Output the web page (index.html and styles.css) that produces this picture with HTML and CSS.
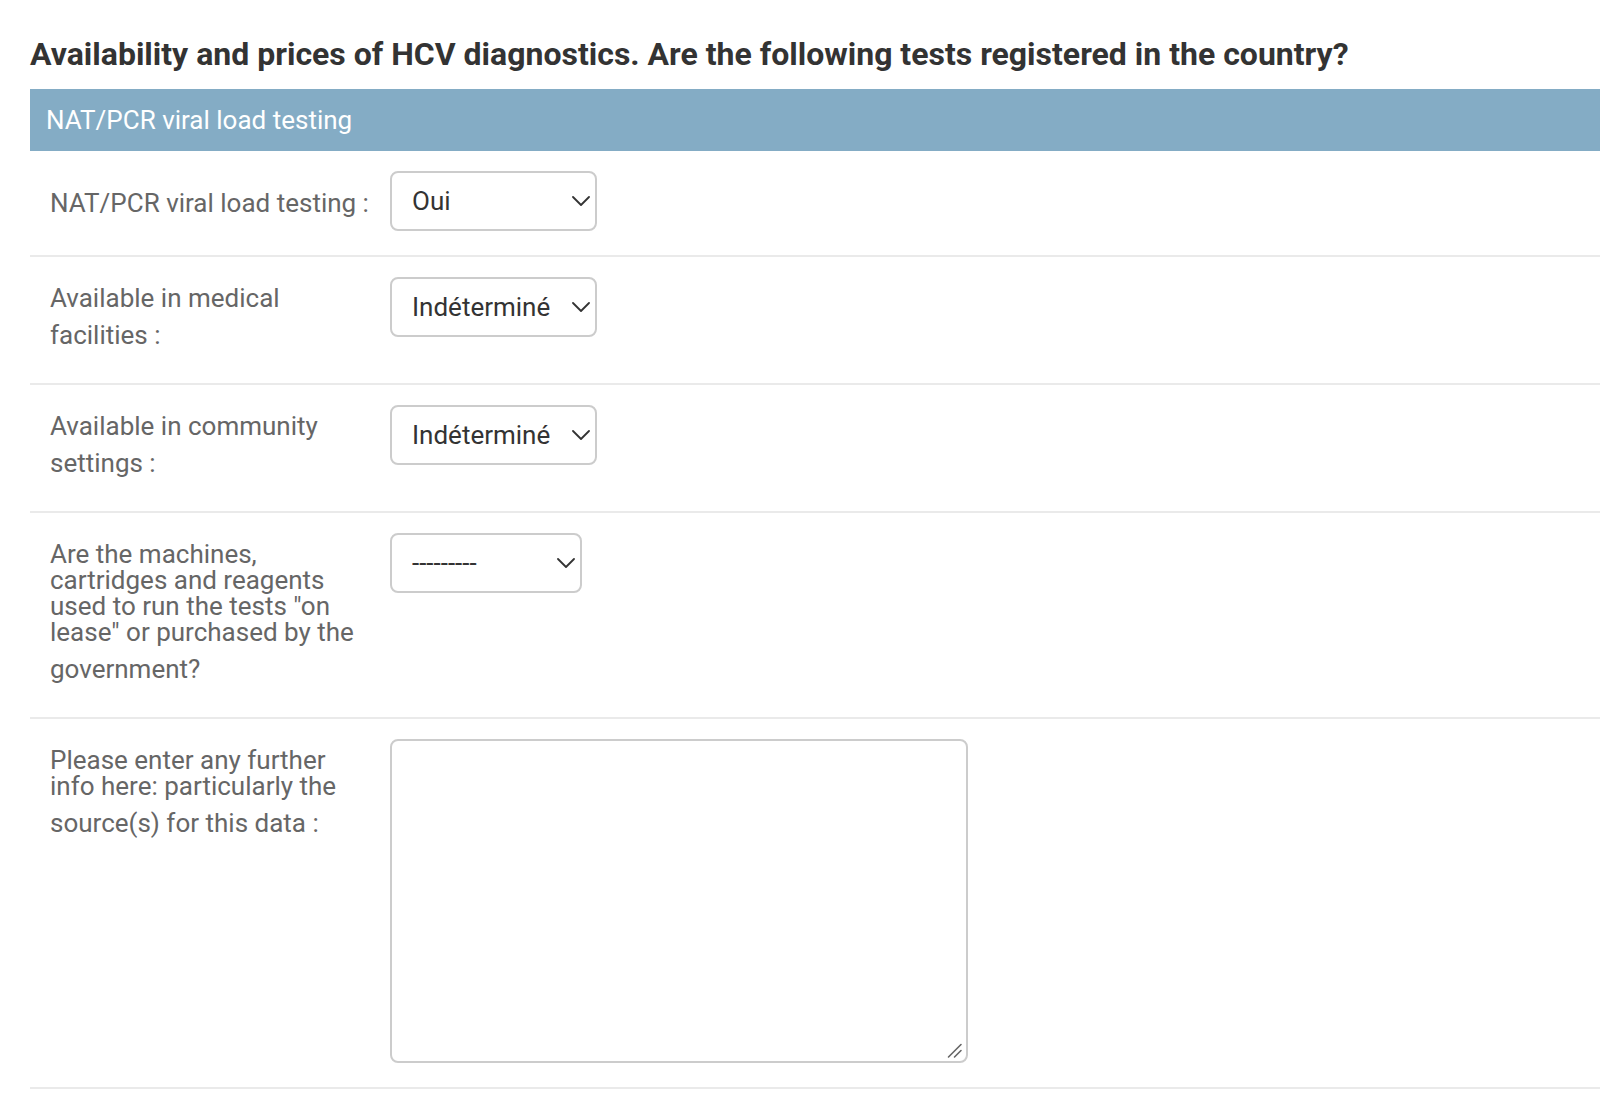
FILE: index.html
```html
<!DOCTYPE html>
<html lang="fr">
<head>
<meta charset="utf-8">
<title>HCV diagnostics</title>
<link rel="stylesheet" href="styles.css">
</head>
<body>
<main class="content">
  <h2 class="page-title">Availability and prices of HCV diagnostics. Are the following tests registered in the country?</h2>
  <fieldset class="module">
    <h3 class="module-caption">NAT/PCR viral load testing</h3>

    <div class="form-row">
      <label class="field-label" for="nat">NAT/PCR viral load testing :</label>
      <div class="field">
        <span class="select-wrap">
          <select id="nat" class="select select-yn">
            <option>Oui</option>
            <option>Non</option>
            <option>Indéterminé</option>
          </select>
          <svg class="chevron" width="18" height="10" viewBox="0 0 18 10" aria-hidden="true"><path d="M1 1 L9 9 L17 1" fill="none" stroke="#333" stroke-width="1.8" stroke-linecap="round" stroke-linejoin="round"/></svg>
        </span>
      </div>
    </div>

    <div class="form-row">
      <label class="field-label" for="medical">Available in medical facilities :</label>
      <div class="field">
        <span class="select-wrap">
          <select id="medical" class="select select-yn">
            <option>Indéterminé</option>
            <option>Oui</option>
            <option>Non</option>
          </select>
          <svg class="chevron" width="18" height="10" viewBox="0 0 18 10" aria-hidden="true"><path d="M1 1 L9 9 L17 1" fill="none" stroke="#333" stroke-width="1.8" stroke-linecap="round" stroke-linejoin="round"/></svg>
        </span>
      </div>
    </div>

    <div class="form-row">
      <label class="field-label" for="community">Available in community settings :</label>
      <div class="field">
        <span class="select-wrap">
          <select id="community" class="select select-yn">
            <option>Indéterminé</option>
            <option>Oui</option>
            <option>Non</option>
          </select>
          <svg class="chevron" width="18" height="10" viewBox="0 0 18 10" aria-hidden="true"><path d="M1 1 L9 9 L17 1" fill="none" stroke="#333" stroke-width="1.8" stroke-linecap="round" stroke-linejoin="round"/></svg>
        </span>
      </div>
    </div>

    <div class="form-row">
      <label class="field-label" for="lease">Are the machines, cartridges and reagents used to run the tests "on lease" or purchased by the government?</label>
      <div class="field">
        <span class="select-wrap">
          <select id="lease" class="select select-lease">
            <option>---------</option>
            <option>On lease</option>
            <option>Purchased</option>
          </select>
          <svg class="chevron" width="18" height="10" viewBox="0 0 18 10" aria-hidden="true"><path d="M1 1 L9 9 L17 1" fill="none" stroke="#333" stroke-width="1.8" stroke-linecap="round" stroke-linejoin="round"/></svg>
        </span>
      </div>
    </div>

    <div class="form-row">
      <label class="field-label" for="info">Please enter any further info here: particularly the source(s) for this data :</label>
      <div class="field">
        <span class="textarea-wrap">
          <textarea id="info" class="textarea"></textarea>
          <svg class="resize-grip" width="18" height="18" viewBox="0 0 18 18" aria-hidden="true"><path d="M1.5 15 L14 2.5 M7.5 15 L14 8.5" fill="none" stroke="#666" stroke-width="1.6" stroke-linecap="round"/></svg>
        </span>
      </div>
    </div>
  </fieldset>
</main>
</body>
</html>
```

FILE: styles.css
```css
html, body {
  margin: 0;
  padding: 0;
  background: #fff;
}

body {
  font-family: Roboto, "Liberation Sans", Arial, sans-serif;
  color: #333;
  overflow: hidden;
}

.content {
  padding: 35px 0 0 30px;
}

.page-title {
  margin: 0 0 16px 0;
  font-size: 32px;
  font-weight: 700;
  line-height: 38px;
  color: #333;
  white-space: nowrap;
}

.module {
  margin: 0;
  padding: 0;
  border: 0;
  min-width: 0;
}

.module-caption {
  margin: 0;
  padding: 16px;
  background: #84acc5;
  color: #fff;
  font-size: 26px;
  font-weight: 400;
  line-height: normal;
}

.form-row {
  display: flex;
  align-items: flex-start;
  padding: 20px;
  border-bottom: 2px solid #eaeaea;
}

.field-label {
  flex: none;
  box-sizing: content-box;
  width: 320px;
  padding: 8px 20px 15px 0;
  font-size: 26px;
  line-height: 26px;
  color: #666;
}

.field-label::after {
  content: "";
  display: inline-block;
  width: 0;
  height: 33px;
  vertical-align: baseline;
}

.field {
  padding-bottom: 4px;
}

.select-wrap {
  position: relative;
  display: block;
}

.select {
  display: block;
  box-sizing: border-box;
  height: 60px;
  margin: 0;
  padding: 0 40px 0 20px;
  border: 2px solid #cccccc;
  border-radius: 8px;
  background: #fff;
  color: #333;
  font-family: Roboto, "Liberation Sans", Arial, sans-serif;
  font-size: 26px;
  -webkit-appearance: none;
  appearance: none;
  outline: none;
}

.select-yn {
  width: 207px;
}

.select-lease {
  width: 192px;
}

.chevron {
  position: absolute;
  right: 7px;
  top: 25px;
  pointer-events: none;
}

.textarea-wrap {
  position: relative;
  display: block;
}

.textarea {
  display: block;
  box-sizing: border-box;
  width: 578px;
  height: 324px;
  margin: 0;
  padding: 8px 10px;
  border: 2px solid #cccccc;
  border-radius: 8px;
  background: #fff;
  color: #333;
  font-family: Roboto, "Liberation Sans", Arial, sans-serif;
  font-size: 26px;
  resize: none;
  outline: none;
}

.resize-grip {
  position: absolute;
  right: 3px;
  bottom: 3px;
  pointer-events: none;
}
```
